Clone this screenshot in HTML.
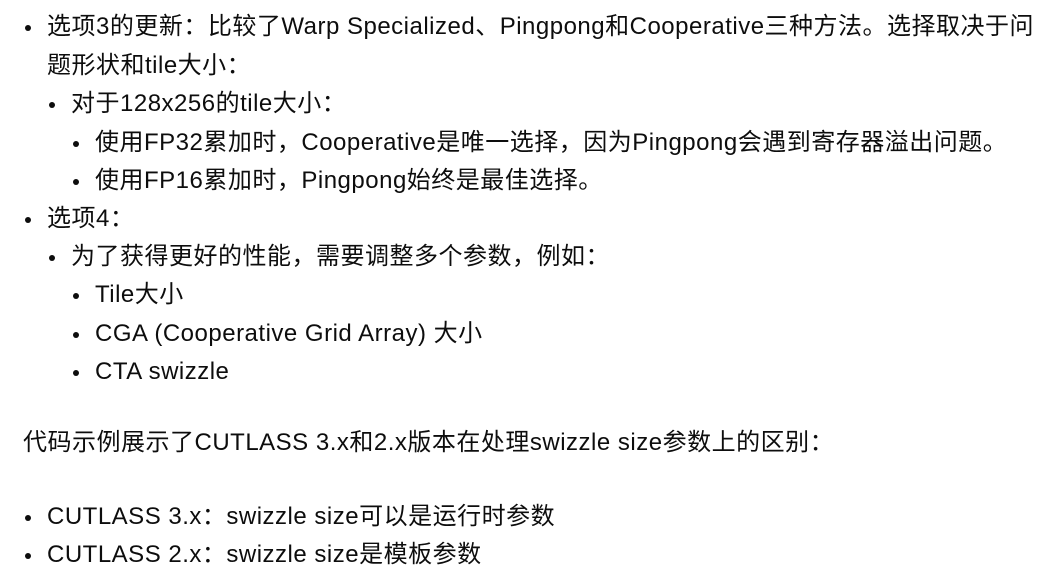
<!DOCTYPE html>
<html><head><meta charset="utf-8"><style>
body{margin:0;width:1045px;height:580px;background:#fff;overflow:hidden;color:#0d0d0d;font-family:"Liberation Sans","Noto Sans CJK SC",sans-serif;font-size:24px;letter-spacing:0.5px;}
.l{position:absolute;white-space:nowrap;line-height:38px;height:38px;}
.b{position:absolute;width:6px;height:6px;border-radius:50%;background:#0d0d0d;}
</style></head><body>
<div class="b" style="left:25px;top:25px"></div>
<div class="l" style="left:47px;top:8px">选项3的更新：比较了Warp Specialized、Pingpong和Cooperative三种方法。选择取决于问</div>
<div class="l" style="left:47px;top:47px">题形状和tile大小：</div>
<div class="b" style="left:49px;top:102px"></div>
<div class="l" style="left:71px;top:85px">对于128x256的tile大小：</div>
<div class="b" style="left:73px;top:141px"></div>
<div class="l" style="left:95px;top:124px">使用FP32累加时，Cooperative是唯一选择，因为Pingpong会遇到寄存器溢出问题。</div>
<div class="b" style="left:73px;top:179px"></div>
<div class="l" style="left:95px;top:162px">使用FP16累加时，Pingpong始终是最佳选择。</div>
<div class="b" style="left:25px;top:217px"></div>
<div class="l" style="left:47px;top:200px">选项4：</div>
<div class="b" style="left:49px;top:255px"></div>
<div class="l" style="left:71px;top:238px">为了获得更好的性能，需要调整多个参数，例如：</div>
<div class="b" style="left:73px;top:293px"></div>
<div class="l" style="left:95px;top:276px">Tile大小</div>
<div class="b" style="left:73px;top:332px"></div>
<div class="l" style="left:95px;top:315px">CGA (Cooperative Grid Array) 大小</div>
<div class="b" style="left:73px;top:370px"></div>
<div class="l" style="left:95px;top:353px">CTA swizzle</div>
<div class="l" style="left:23px;top:424px">代码示例展示了CUTLASS 3.x和2.x版本在处理swizzle size参数上的区别：</div>
<div class="b" style="left:25px;top:515px"></div>
<div class="l" style="left:47px;top:498px">CUTLASS 3.x：swizzle size可以是运行时参数</div>
<div class="b" style="left:25px;top:553px"></div>
<div class="l" style="left:47px;top:536px">CUTLASS 2.x：swizzle size是模板参数</div>
</body></html>
